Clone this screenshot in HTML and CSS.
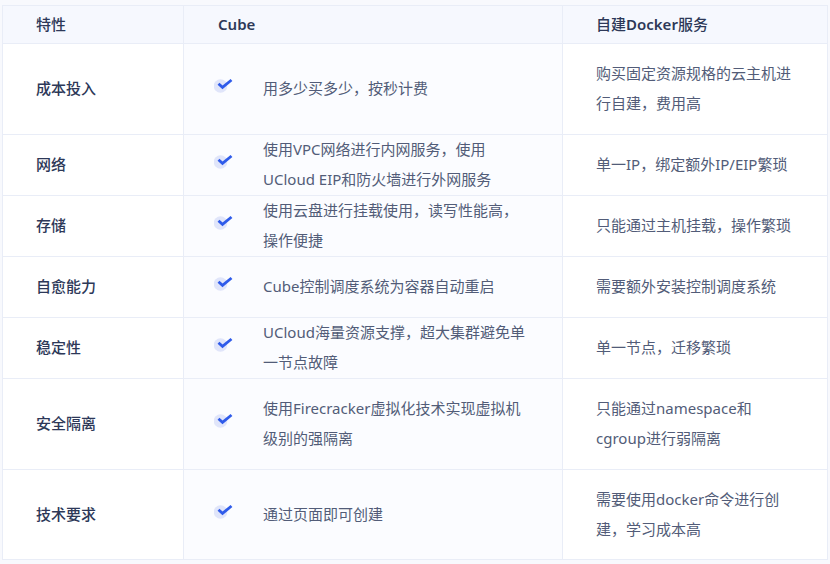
FILE: index.html
```html
<!DOCTYPE html>
<html lang="zh-CN">
<head>
<meta charset="utf-8">
<title>Cube 对比</title>
<link rel="stylesheet" href="styles.css">
</head>
<body>
<svg class="defs" width="0" height="0" aria-hidden="true"><defs><symbol id="check" viewBox="0 0 20 16"><circle cx="6.5" cy="8" r="6.8" fill="#e0e5fa"/><path d="M4.5 5.8 L8.5 9.4 L17.5 2" fill="none" stroke="#2f5bea" stroke-width="2.8"/></symbol></defs></svg>
<table class="compare">
<colgroup><col class="c1"><col class="c2"><col class="c3"></colgroup>
<thead><tr class="rh"><th class="feat"><div class="t">特性</div></th><th class="cube"><div class="t lat">Cube</div></th><th class="dock"><div class="t">自建<span class="lat">Docker</span>服务</div></th></tr></thead>
<tbody>
<tr class="tall"><th class="feat"><div class="t">成本投入</div></th><td class="cube"><div class="t cell"><svg class="ic"><use href="#check"/></svg><span>用多少买多少，按秒计费</span></div></td><td class="dock"><div class="t">购买固定资源规格的云主机进行自建，费用高</div></td></tr>
<tr class="short"><th class="feat"><div class="t">网络</div></th><td class="cube"><div class="t cell"><svg class="ic"><use href="#check"/></svg><span>使用VPC网络进行内网服务，使用UCloud EIP和防火墙进行外网服务</span></div></td><td class="dock"><div class="t">单一IP，绑定额外IP/EIP繁琐</div></td></tr>
<tr class="short"><th class="feat"><div class="t">存储</div></th><td class="cube"><div class="t cell"><svg class="ic"><use href="#check"/></svg><span>使用云盘进行挂载使用，读写性能高，操作便捷</span></div></td><td class="dock"><div class="t">只能通过主机挂载，操作繁琐</div></td></tr>
<tr class="short"><th class="feat"><div class="t">自愈能力</div></th><td class="cube"><div class="t cell"><svg class="ic"><use href="#check"/></svg><span>Cube控制调度系统为容器自动重启</span></div></td><td class="dock"><div class="t">需要额外安装控制调度系统</div></td></tr>
<tr class="short"><th class="feat"><div class="t">稳定性</div></th><td class="cube"><div class="t cell"><svg class="ic"><use href="#check"/></svg><span>UCloud海量资源支撑，超大集群避免单一节点故障</span></div></td><td class="dock"><div class="t">单一节点，迁移繁琐</div></td></tr>
<tr class="tall"><th class="feat"><div class="t">安全隔离</div></th><td class="cube"><div class="t cell"><svg class="ic"><use href="#check"/></svg><span>使用Firecracker虚拟化技术实现虚拟机级别的强隔离</span></div></td><td class="dock"><div class="t">只能通过namespace和cgroup进行弱隔离</div></td></tr>
<tr class="last"><th class="feat"><div class="t">技术要求</div></th><td class="cube"><div class="t cell"><svg class="ic"><use href="#check"/></svg><span>通过页面即可创建</span></div></td><td class="dock"><div class="t">需要使用docker命令进行创建，学习成本高</div></td></tr>
</tbody>
</table>
</body>
</html>
```
FILE: styles.css
```css
html, body { margin: 0; padding: 0; }
body {
  width: 830px;
  height: 564px;
  overflow: hidden;
  background: #f8f9fd;
  padding: 5px 3px 0 2px;
  box-sizing: border-box;
  font-family: "Noto Sans", "Noto Sans CJK SC", sans-serif;
}
.defs { position: absolute; }
.compare {
  width: 825px;
  table-layout: fixed;
  border-collapse: collapse;
  background: #fff;
  font-size: 15px;
  color: #525c78;
}
.c1 { width: 181px; }
.c2 { width: 379px; }
.c3 { width: 265px; }
.compare th, .compare td {
  border: 1px solid #e9edf7;
  padding: 0;
  text-align: left;
  vertical-align: middle;
  line-height: 30px;
}
.t { margin-top: -2px; }
.rh { height: 38px; background: #f6f8fe; }
.rh th { font-size: 15px; font-weight: 500; color: #2d3858; }
.rh .feat { padding-left: 33px; }
.rh .cube { padding-left: 34px; }
.rh .dock { padding-left: 33px; }
.rh .lat { font-weight: 600; }
.tall { height: 91px; }
.short { height: 61px; }
.last { height: 90px; }
tbody .feat { padding-left: 33px; font-weight: 500; font-size: 15px; color: #2d3858; background: #fff; }
tbody .cube { background: #fbfcff; padding-left: 30px; }
tbody .dock { padding: 0 34px 0 33px; background: #fff; }
.cell { display: flex; align-items: center; }
.ic { width: 20px; height: 16px; flex: none; margin: -4px 29px 0 0; }
.cell span { width: 268px; }
```
